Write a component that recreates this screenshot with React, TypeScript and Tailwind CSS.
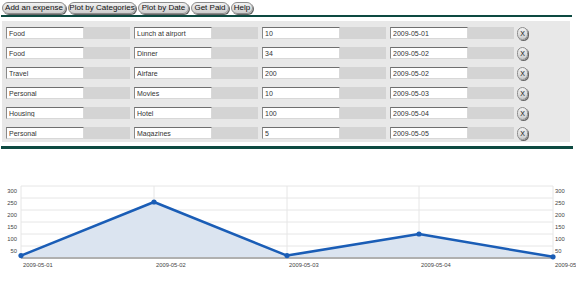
const expenses = [
  { category: "Food", what: "Lunch at airport", amount: "10", date: "2009-05-01" },
  { category: "Food", what: "Dinner", amount: "34", date: "2009-05-02" },
  { category: "Travel", what: "Airfare", amount: "200", date: "2009-05-02" },
  { category: "Personal", what: "Movies", amount: "10", date: "2009-05-03" },
  { category: "Housing", what: "Hotel", amount: "100", date: "2009-05-04" },
  { category: "Personal", what: "Magazines", amount: "5", date: "2009-05-05" },
];

const navButtons = [
  { label: "Add an expense", width: "w-[64px]" },
  { label: "Plot by Categories", width: "w-[68px]" },
  { label: "Plot by Date", width: "w-[51px]" },
  { label: "Get Paid", width: "w-[38px]" },
  { label: "Help", width: "w-[22px]" },
];

const points = [
  { x: 21, y: 255.6, date: "2009-05-01" },
  { x: 154, y: 202, date: "2009-05-02" },
  { x: 287, y: 255.6, date: "2009-05-03" },
  { x: 419, y: 234, date: "2009-05-04" },
  { x: 553, y: 256.8, date: "2009-05-05" },
];

const gridY = [
  { y: 186, label: "300" },
  { y: 198, label: "250" },
  { y: 210, label: "200" },
  { y: 222, label: "150" },
  { y: 234, label: "100" },
  { y: 246, label: "50" },
];

function Field({ value }: { value: string }) {
  return (
    <div className="flex items-center">
      <input
        readOnly
        value={value}
        className="w-[78px] h-[12px] bg-white border border-t-[#6f6f6f] border-l-[#8a8a8a] border-b-[#d8d8d8] border-r-[#d8d8d8] pl-[2px] text-[7px] leading-[10px] text-[#333] outline-none"
      />
      <div className="w-[46px] h-[12px] bg-[#d4d4d4]" />
    </div>
  );
}

function Chart() {
  const line = points.map((p) => `${p.x},${p.y}`).join(" ");
  const area = `${line} 553,258 21,258`;
  return (
    <svg width="576" height="133" viewBox="0 149 576 133" className="block">
      {gridY.map((g) => (
        <line key={g.y} x1="21" x2="553" y1={g.y} y2={g.y} stroke="#e6e6e6" strokeWidth="1" />
      ))}
      {points.map((p) => (
        <line key={p.x} x1={p.x} x2={p.x} y1="186" y2="258" stroke="#e6e6e6" strokeWidth="1" />
      ))}
      <polygon points={area} fill="#dbe4f0" />
      <line x1="21" x2="553" y1="258" y2="258" stroke="#b0b0b0" strokeWidth="2" />
      <polyline points={line} fill="none" stroke="#1a5db6" strokeWidth="2.5" strokeLinejoin="round" />
      {points.map((p) => (
        <circle key={p.date} cx={p.x} cy={p.y} r="2.6" fill="#1a5db6" />
      ))}
      <g fontFamily="'Liberation Sans', Arial, sans-serif" fontSize="5.8" fill="#444">
        {gridY.map((g) => (
          <text key={`l${g.y}`} x="17" y={g.y + 7} textAnchor="end">
            {g.label}
          </text>
        ))}
        {gridY.map((g) => (
          <text key={`r${g.y}`} x="555" y={g.y + 7}>
            {g.label}
          </text>
        ))}
        {points.map((p) => (
          <text key={`d${p.date}`} x={p.x + 2} y="267">
            {p.date}
          </text>
        ))}
      </g>
    </svg>
  );
}

export default function App() {
  return (
    <div className="w-[576px] h-[282px] bg-white overflow-hidden font-['Liberation_Sans',Arial,sans-serif]">
      <div className="flex gap-[2px] pl-[2px] pt-[2px] h-[15px]">
        {navButtons.map((b) => (
          <button
            key={b.label}
            className={`${b.width} h-[12px] flex items-center justify-center rounded-full border border-[#8c8c8c] bg-gradient-to-b from-[#f2f2f2] to-[#cdcdcd] shadow-[1px_1px_0_#666] text-[8px] leading-none text-[#111] whitespace-nowrap`}
          >
            {b.label}
          </button>
        ))}
      </div>
      <div className="ml-[1px] w-[571px] h-[2px] bg-[#0d4a41]" />
      <div className="mt-[4px] ml-[2px] w-[568px] bg-[#e8e8e8] pt-[6px] pb-[3px] flex flex-col gap-[8px]">
        {expenses.map((e, i) => (
          <div key={i} className="flex items-center h-[12px] gap-[4px] pl-[4px]">
            <Field value={e.category} />
            <Field value={e.what} />
            <Field value={e.amount} />
            <Field value={e.date} />
            <button className="ml-[-1px] w-[11px] h-[13px] shrink-0 flex items-center justify-center rounded-full border border-[#8c8c8c] bg-gradient-to-b from-[#f2f2f2] to-[#cdcdcd] shadow-[1px_1px_0_#666] text-[7px] leading-none text-[#111]">
              X
            </button>
          </div>
        ))}
      </div>
      <div className="mt-[4px] ml-[1px] w-[572px] h-[3px] bg-[#0d4a41]" />
      <Chart />
    </div>
  );
}
